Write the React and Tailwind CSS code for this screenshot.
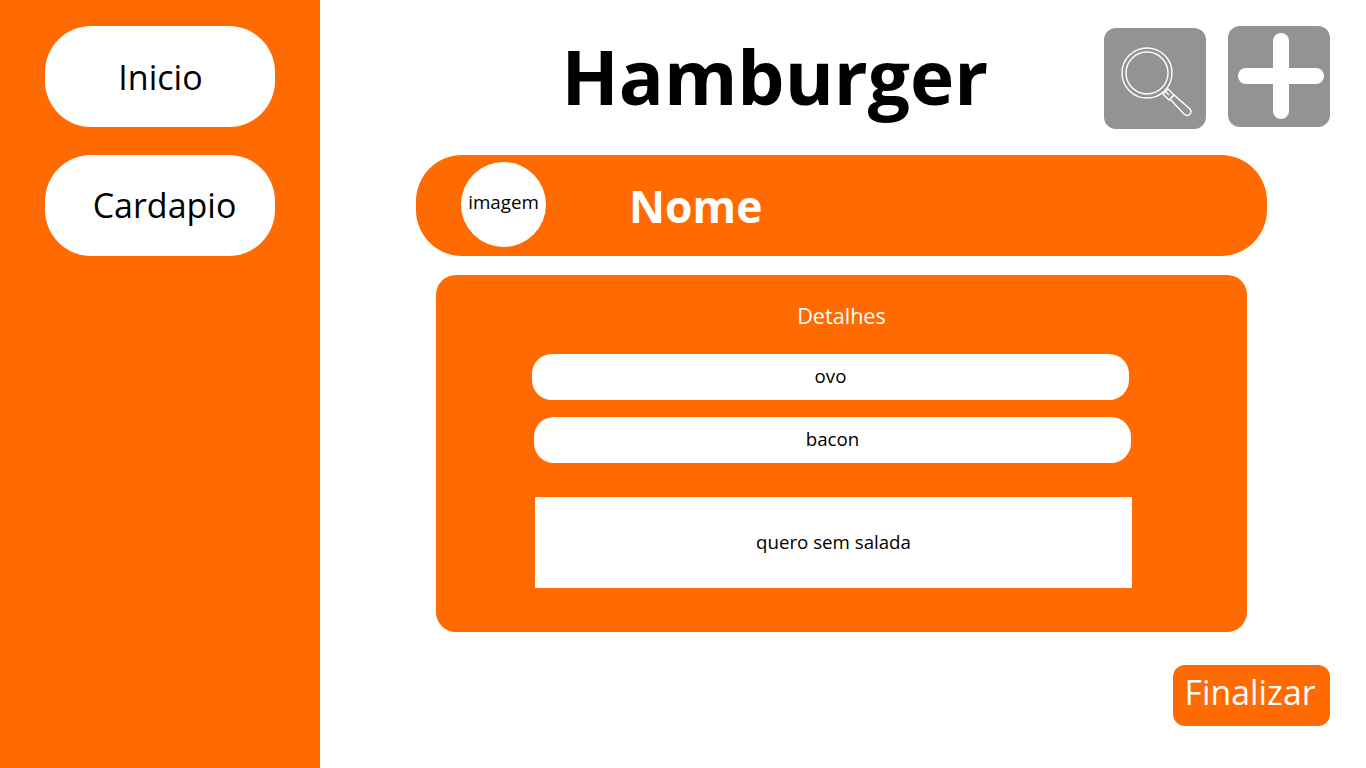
const orange = "bg-[#ff6b00]";

const SearchIcon = () => (
    <svg width="102" height="101" viewBox="0 0 102 101" fill="none" stroke="white" strokeWidth="1.4">
        <circle cx="43" cy="45" r="25" />
        <circle cx="43" cy="45" r="21" />
        <path d="M61 63 L65 67" />
        <path d="M59 66 L64 61 L70 67 L65 72 Z" />
        <path d="M67 70 L70 67 L86 81 Q88 84 86 86 Q83 89 80 86 L66 71" />
    </svg>
);

const PlusIcon = () => (
    <svg width="102" height="101" viewBox="0 0 102 101" fill="white">
        <rect x="45" y="7" width="16" height="86" rx="8" />
        <rect x="10" y="42" width="86" height="16" rx="8" />
    </svg>
);

const App = () => {
    return (
        <div className="flex w-[1366px] h-[768px] overflow-hidden bg-white text-black font-['Open_Sans',sans-serif]">
            <aside className={`w-[320px] h-full shrink-0 ${orange} pl-[45px] pt-[26px] flex flex-col gap-[28px]`}>
                <button className="w-[230px] h-[101px] bg-white rounded-[46px] text-[34px] pt-[1px] pl-[1px]">Inicio</button>
                <button className="w-[230px] h-[101px] bg-white rounded-[46px] text-[34px] pl-[9px]">Cardapio</button>
            </aside>

            <main className="flex-1 flex flex-col">
                <div className="h-[155px] flex items-start">
                    <h1 className="ml-[241.5px] mt-[24px] w-[425.5px] text-[74.8px] leading-[104px] font-bold whitespace-nowrap">Hamburger</h1>
                    <button className="ml-[117px] mt-[28px] w-[102px] h-[101px] rounded-[12px] bg-[#939393]">
                        <SearchIcon />
                    </button>
                    <button className="ml-[22px] mt-[26px] w-[102px] h-[101px] rounded-[12px] bg-[#939393]">
                        <PlusIcon />
                    </button>
                </div>

                <div className={`ml-[96px] w-[851px] h-[101px] rounded-[46px] ${orange} flex items-center`}>
                    <div className="ml-[45px] mb-[3px] w-[85px] h-[85px] rounded-full bg-white flex items-center justify-center text-[18.8px] pb-[3px]">imagem</div>
                    <span className="ml-[83px] pt-[2px] text-[44.4px] font-bold text-white">Nome</span>
                </div>

                <section className={`ml-[116px] mt-[19px] w-[811px] h-[357px] rounded-[20px] ${orange} flex flex-col`}>
                    <h2 className="mt-[27px] text-center text-[21.6px] leading-[28px] text-white">Detalhes</h2>
                    <div className="mt-[24px] ml-[96px] w-[597px] h-[46px] rounded-[20px] bg-white flex items-center justify-center text-[18.7px] pb-[1px]">ovo</div>
                    <div className="mt-[17px] ml-[98px] w-[597px] h-[46px] rounded-[20px] bg-white flex items-center justify-center text-[18.7px] pb-[1px]">bacon</div>
                    <div className="mt-[34px] ml-[99px] w-[597px] h-[91px] bg-white flex items-center justify-center text-[18.7px]">quero sem salada</div>
                </section>

                <div className="mt-[33px] flex justify-end pr-[36px]">
                    <button className={`w-[157px] h-[61px] rounded-[12px] ${orange} text-white text-[33.8px] pb-[7px] pr-[3px]`}>Finalizar</button>
                </div>
            </main>
        </div>
    );
};

export default App;
